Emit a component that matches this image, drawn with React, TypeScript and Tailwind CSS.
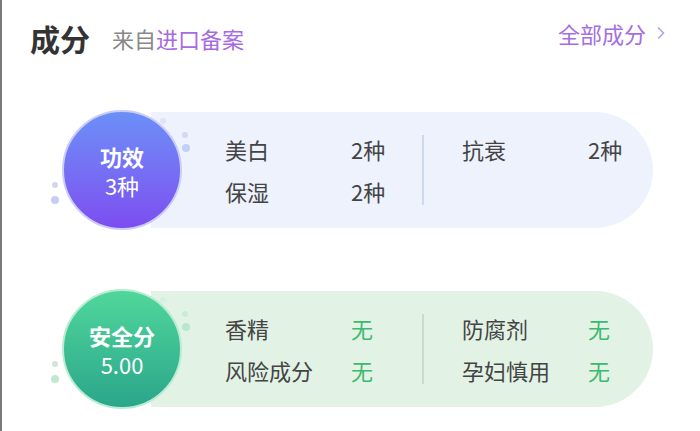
import React from 'react';

type Row = { label: string; value: string };

const Dots = ({ tone }: { tone: 'blue' | 'green' }) => {
    const c = tone === 'blue'
        ? ['bg-[#dfe4f7]', 'bg-[#d2d9f5]', 'bg-[#c4cff4]', 'bg-[#d3d6ef]', 'bg-[#c8cdf6]']
        : ['bg-[#d8efe0]', 'bg-[#c9ecd6]', 'bg-[#b9e7cb]', 'bg-[#cfe6d8]', 'bg-[#bfe9cf]'];
    return (
        <>
            <span className={`absolute left-[98px] top-[8px] w-[6px] h-[6px] rounded-full ${c[0]}`} />
            <span className={`absolute left-[120px] top-[22px] w-[6px] h-[6px] rounded-full ${c[1]}`} />
            <span className={`absolute left-[120px] top-[34px] w-[8px] h-[8px] rounded-full ${c[2]}`} />
            <span className={`absolute left-[-10px] top-[72px] w-[6px] h-[6px] rounded-full ${c[3]}`} />
            <span className={`absolute left-[-11px] top-[86px] w-[8px] h-[8px] rounded-full ${c[4]}`} />
        </>
    );
};

function Card({ tone, title, sub, left, right }: {
    tone: 'blue' | 'green';
    title: string;
    sub: string;
    left: Row[];
    right: Row[];
}) {
    const blue = tone === 'blue';
    const valueColor = blue ? 'text-[#444]' : 'text-[#3dba6f]';
    const renderRows = (rows: Row[]) => rows.map(r => (
        <div key={r.label} className="flex h-[42px] items-center">
            <span className="w-[126px] text-[#444]">{r.label}</span>
            <span className={valueColor}>{r.value}</span>
        </div>
    ));
    return (
        <div className="relative flex items-center ml-[60px] h-[120px]">
            <Dots tone={tone} />
            <div
                className={`relative z-10 shrink-0 w-[120px] h-[120px] rounded-full border-2 flex flex-col items-center justify-center gap-[7px] text-white ${blue
                    ? 'border-[#c9cdf8] bg-gradient-to-b from-[#6a8ff7] to-[#7c4cf0]'
                    : 'border-[#b9ecd2] bg-gradient-to-b from-[#50d79b] to-[#2aa68a]'}`}
            >
                <span className="text-[22px] font-bold leading-none">{title}</span>
                <span className="text-[22px] leading-none">{sub}</span>
            </div>
            <div
                className={`ml-[-31px] w-[502px] h-[116px] rounded-r-[58px] flex items-center pl-[74px] text-[22px] ${blue ? 'bg-[#edf2fd]' : 'bg-[#e2f2e5]'}`}
            >
                <div className="w-[197px] flex flex-col">{renderRows(left)}</div>
                <div className={`w-[2px] h-[70px] ${blue ? 'bg-[#cfd9ee]' : 'bg-[#c8ddcd]'}`} />
                <div className="pl-[38px] flex flex-col self-center">{renderRows(right)}
                    {right.length < left.length && <div className="h-[42px]" />}
                </div>
            </div>
        </div>
    );
}

export default function App() {
    return (
        <div
            className="h-[431px] w-[700px] bg-white border-l-2 border-[#7a7a7a] overflow-hidden"
            style={{ fontFamily: '"Noto Sans CJK SC", "Noto Sans", sans-serif' }}
        >
            <div className="flex items-start justify-between pl-[28px] pr-[34px] h-[60px]">
                <div className="flex items-center mt-[22px]">
                    <span className="text-[30px] font-bold text-[#333] leading-[32px]">成分</span>
                    <span className="ml-[22px] text-[22px] text-[#888] leading-[32px]">
                        来自<span className="text-[#a66ae1]">进口备案</span>
                    </span>
                </div>
                <div className="flex items-center mt-[20px] text-[22px] text-[#a56fe0] leading-[26px]">
                    全部成分
                    <svg width="10" height="14" viewBox="0 0 10 14" className="ml-[10px]">
                        <path d="M2 1.5 L7.5 7 L2 12.5" fill="none" stroke="#b9a2e6" strokeWidth="1.6" />
                    </svg>
                </div>
            </div>
            <div className="mt-[50px] flex flex-col gap-[59px]">
                <Card
                    tone="blue"
                    title="功效"
                    sub="3种"
                    left={[{ label: '美白', value: '2种' }, { label: '保湿', value: '2种' }]}
                    right={[{ label: '抗衰', value: '2种' }]}
                />
                <Card
                    tone="green"
                    title="安全分"
                    sub="5.00"
                    left={[{ label: '香精', value: '无' }, { label: '风险成分', value: '无' }]}
                    right={[{ label: '防腐剂', value: '无' }, { label: '孕妇慎用', value: '无' }]}
                />
            </div>
        </div>
    );
}
